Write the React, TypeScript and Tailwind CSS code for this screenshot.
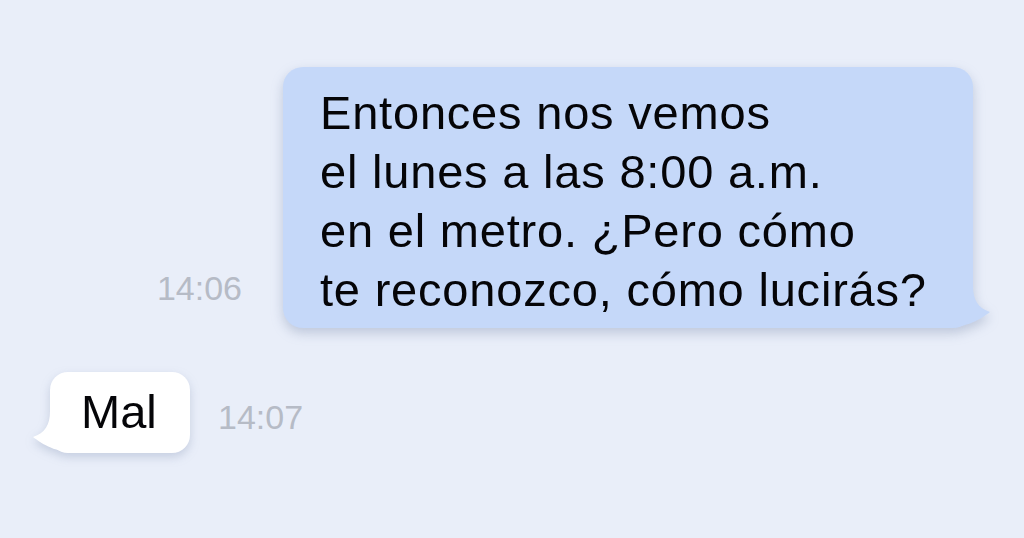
import React from "react";

const font = { fontFamily: '"Liberation Sans", Arial, sans-serif' };

export default function App() {
  return (
    <div
      className="w-[1024px] h-[538px] bg-[#e9eef9] flex flex-col overflow-hidden"
      style={font}
    >
      <div className="flex justify-end items-end pt-[67px] pr-[51px] gap-[41px]">
        <div className="text-[34px] leading-[39px] text-[#b6bbc6] mb-[20px]">14:06</div>
        <div className="relative drop-shadow-[0_5px_6px_rgba(90,110,150,0.3)]">
          <div className="relative w-[690px] h-[261px] bg-[#c5d8f9] rounded-[20px] pl-[37px] pt-[16px] text-[47px] leading-[59px] tracking-[0.8px] text-[#050508] z-10">
            <div>Entonces nos vemos</div>
            <div>el lunes a las 8:00 a.m.</div>
            <div>en el metro. ¿Pero cómo</div>
            <div>te reconozco, cómo lucirás?</div>
          </div>
          <svg
            className="absolute left-[666px] top-[213px]"
            width="44"
            height="48"
            viewBox="0 0 44 48"
          >
            <path d="M0 0 H24 V6 C24 20 29 28 41 32 C33 38 22 46 0 48 Z" fill="#c5d8f9" />
          </svg>
        </div>
      </div>

      <div className="flex items-center pt-[44px] pl-[50px] gap-[28px]">
        <div className="relative drop-shadow-[0_4px_5px_rgba(90,110,150,0.25)]">
          <svg
            className="absolute left-[-20px] top-[33px]"
            width="44"
            height="48"
            viewBox="0 0 44 48"
          >
            <path d="M44 0 H20 V6 C20 20 15 28 3 32 C11 38 22 46 44 48 Z" fill="#ffffff" />
          </svg>
          <div className="relative w-[140px] h-[81px] bg-white rounded-[18px] flex items-center pl-[31px] text-[47px] text-[#050508] z-10">
            Mal
          </div>
        </div>
        <div className="text-[34px] leading-[39px] text-[#b6bbc6] mt-[10px]">14:07</div>
      </div>
    </div>
  );
}
